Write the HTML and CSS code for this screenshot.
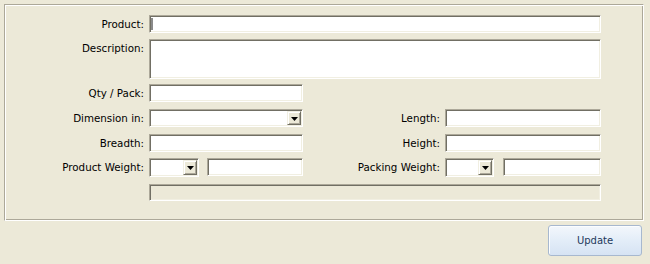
FILE: index.html
```html
<!DOCTYPE html>
<html>
<head>
<meta charset="utf-8">
<link rel="stylesheet" href="styles.css">
</head>
<body>
<div class="panel">
  <div class="row r-product">
    <label class="lbl">Product:</label>
    <div class="field wide caret-host"><span class="caret"></span></div>
  </div>
  <div class="row r-desc">
    <label class="lbl">Description:</label>
    <div class="field wide tall"></div>
  </div>
  <div class="row r-qty">
    <label class="lbl">Qty / Pack:</label>
    <div class="field half"></div>
  </div>
  <div class="row r-dim">
    <label class="lbl">Dimension in:</label>
    <div class="field half combo">
      <span class="dd"><svg width="7" height="4" viewBox="0 0 7 4"><polygon points="0,0 7,0 3.5,4" fill="#000"/></svg></span>
    </div>
    <label class="lbl rlbl">Length:</label>
    <div class="field rhalf"></div>
  </div>
  <div class="row r-breadth">
    <label class="lbl">Breadth:</label>
    <div class="field half"></div>
    <label class="lbl rlbl">Height:</label>
    <div class="field rhalf"></div>
  </div>
  <div class="row r-weight">
    <label class="lbl">Product Weight:</label>
    <div class="field small combo">
      <span class="dd"><svg width="7" height="4" viewBox="0 0 7 4"><polygon points="0,0 7,0 3.5,4" fill="#000"/></svg></span>
    </div>
    <div class="field wtext"></div>
    <label class="lbl rlbl">Packing Weight:</label>
    <div class="field rsmall combo">
      <span class="dd"><svg width="7" height="4" viewBox="0 0 7 4"><polygon points="0,0 7,0 3.5,4" fill="#000"/></svg></span>
    </div>
    <div class="field rwtext"></div>
  </div>
  <div class="row r-bottom">
    <span class="lbl"></span>
    <div class="field wide disabled"></div>
  </div>
</div>
<div class="footer">
  <button class="btn">Update</button>
</div>
</body>
</html>
```

FILE: styles.css
```css
html, body {
  margin: 0;
  padding: 0;
  background: #ece9d8;
  width: 650px;
  height: 264px;
  overflow: hidden;
  font-family: "DejaVu Sans", Verdana, sans-serif;
  font-size: 10.3px;
  color: #000;
}

.panel {
  box-sizing: border-box;
  margin: 4px 0 0 4px;
  width: 640px;
  height: 217px;
  border: 1px solid;
  border-color: #aca899 #ffffff #ffffff #aca899;
  box-shadow: inset 1px 1px 0 #ffffff, inset -1px -1px 0 #aca899;
  padding-top: 10px;
  display: flex;
  flex-direction: column;
}

.row {
  display: flex;
  align-items: flex-start;
}

.r-desc { margin-top: 6px; }
.r-qty { margin-top: 5px; }
.r-dim { margin-top: 7px; }
.r-breadth { margin-top: 7px; }
.r-weight { margin-top: 6px; }
.r-bottom { margin-top: 7px; }

.lbl {
  box-sizing: border-box;
  width: 139px;
  flex: none;
  text-align: right;
  line-height: 18px;
  height: 18px;
  margin-right: 5px;
  white-space: nowrap;
}

.rlbl {
  width: 137px;
  margin-right: 5px;
}

.field {
  box-sizing: border-box;
  position: relative;
  flex: none;
  height: 18px;
  background: #fff;
  border: 1px solid;
  border-color: #aca899 #ffffff #ffffff #aca899;
  box-shadow: inset 1px 1px 0 #716f64, inset -1px -1px 0 #f1efe2;
}

.wide { width: 452px; }
.tall { height: 40px; }
.half { width: 154px; }
.rhalf { width: 156px; }
.small { width: 50px; height: 19px; }
.wtext { width: 96px; margin-left: 8px; }
.rsmall { width: 49px; height: 19px; }
.rwtext { width: 98px; margin-left: 9px; }

.disabled {
  background: #ece9d8;
  height: 17px;
}

.caret {
  position: absolute;
  left: 1px;
  top: 2px;
  width: 2px;
  height: 12px;
  background: #8a8a8a;
}

.combo .dd {
  position: absolute;
  right: 1px;
  top: 1px;
  bottom: 1px;
  width: 14px;
  box-sizing: border-box;
  background: #ece9d8;
  border: 1px solid;
  border-color: #f1efe2 #716f64 #716f64 #f1efe2;
  box-shadow: inset 1px 1px 0 #ffffff, inset -1px -1px 0 #aca899;
  display: flex;
  align-items: center;
  justify-content: center;
}

.combo .dd svg {
  display: block;
  margin-top: 1px;
}

.footer {
  display: flex;
  padding-left: 548px;
  margin-top: 4px;
}

.btn {
  box-sizing: border-box;
  width: 94px;
  height: 31px;
  border: 1px solid #a7b8cf;
  border-radius: 3px;
  background: linear-gradient(to bottom, #f3f7fc 0%, #e3edf8 50%, #d6e3f3 100%);
  box-shadow: inset 1px 1px 0 #fbfdff;
  font-family: "DejaVu Sans", Verdana, sans-serif;
  font-size: 10px;
  color: #1e395b;
  padding: 0;
  cursor: default;
}
```
